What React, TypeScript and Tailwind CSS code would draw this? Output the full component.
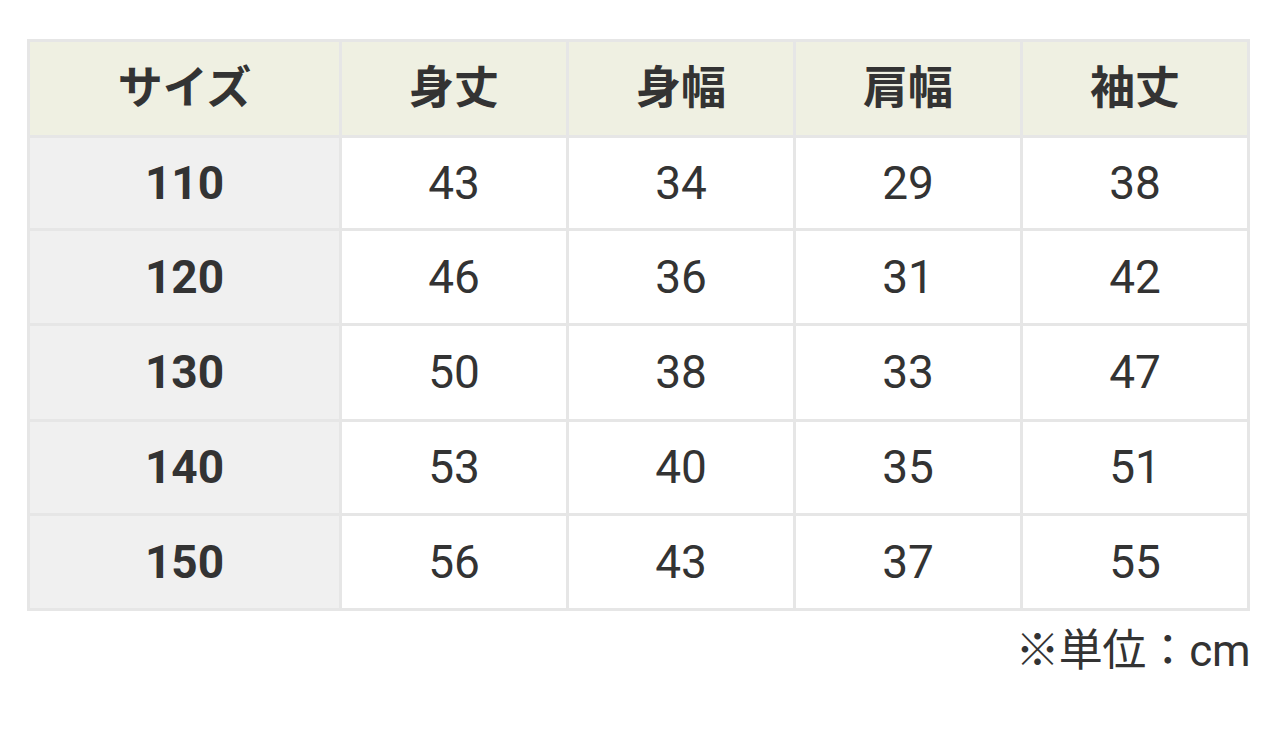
import React from "react";

const headers = ["サイズ", "身丈", "身幅", "肩幅", "袖丈"];
const rows = [
  ["110", "43", "34", "29", "38"],
  ["120", "46", "36", "31", "42"],
  ["130", "50", "38", "33", "47"],
  ["140", "53", "40", "35", "51"],
  ["150", "56", "43", "37", "55"],
];

export default function App() {
  return (
    <div
      className="w-[1280px] h-[740px] bg-white text-[#333333]"
      style={{ fontFamily: 'Roboto, "Noto Sans CJK JP", sans-serif' }}
    >
      <div className="pl-[27px] pt-[39px]">
        <div className="w-[1223px] grid grid-cols-[309px_224px_224px_224px_224px] grid-rows-[93px_90px_92px_93px_91px_92px] gap-[3px] bg-[#e6e6e6] border-[3px] border-[#e6e6e6]">
          {headers.map((h) => (
            <div
              key={h}
              className="bg-[#eff0e2] flex items-center justify-center text-[45px] font-bold"
            >
              {h}
            </div>
          ))}
          {rows.map((r) =>
            r.map((c, i) => (
              <div
                key={r[0] + i}
                className={
                  i === 0
                    ? "bg-[#f0f0f0] flex items-center justify-center text-[46px] font-bold"
                    : "bg-white flex items-center justify-center text-[46px]"
                }
              >
                {c}
              </div>
            ))
          )}
        </div>
        <div className="w-[1223px] flex justify-end pt-[18px] text-[44px] tracking-[-0.5px] leading-none text-[#333333]">
          ※単位：cm
        </div>
      </div>
    </div>
  );
}
